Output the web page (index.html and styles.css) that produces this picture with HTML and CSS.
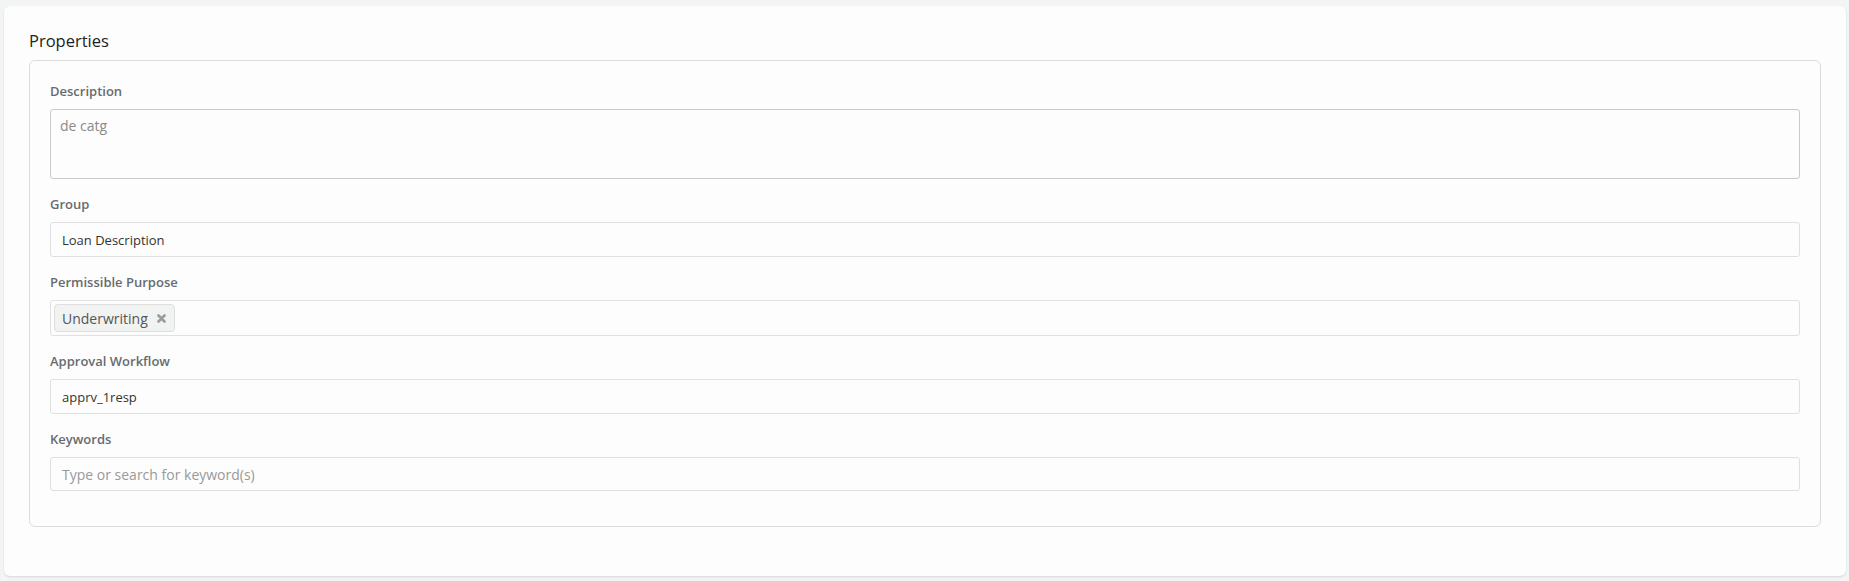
FILE: index.html
```html
<!DOCTYPE html>
<html lang="en">
<head>
<meta charset="utf-8">
<title>Properties</title>
<link rel="stylesheet" href="styles.css">
</head>
<body>
<div class="card">
  <h2 class="card-title">Properties</h2>
  <div class="panel">
    <div class="field">
      <label class="field-label">Description</label>
      <div class="textarea">de catg</div>
    </div>
    <div class="field">
      <label class="field-label">Group</label>
      <div class="input">Loan Description</div>
    </div>
    <div class="field">
      <label class="field-label">Permissible Purpose</label>
      <div class="input tags">
        <span class="chip">Underwriting
          <svg class="chip-x" width="9" height="9" viewBox="0 0 9 9"><path d="M1.5 1.5L7.5 7.5M7.5 1.5L1.5 7.5" stroke="#9a9a9a" stroke-width="2.6" stroke-linecap="round"/></svg>
        </span>
      </div>
    </div>
    <div class="field">
      <label class="field-label">Approval Workflow</label>
      <div class="input">apprv_1resp</div>
    </div>
    <div class="field last">
      <label class="field-label">Keywords</label>
      <div class="input placeholder">Type or search for keyword(s)</div>
    </div>
  </div>
</div>
</body>
</html>
```

FILE: styles.css
```css
html, body {
  margin: 0;
  padding: 0;
}
body {
  background: #f3f4f4;
  font-family: "Open Sans", "Liberation Sans", sans-serif;
  padding: 6px 3px 5px 4px;
  height: 581px;
  box-sizing: border-box;
}
.card {
  background: #fdfdfd;
  border-radius: 6px;
  box-shadow: 0 1px 2px rgba(0,0,0,0.12);
  height: 570px;
  box-sizing: border-box;
  padding: 23px 25px 0 25px;
}
.card-title {
  margin: 0 0 8px 0;
  font-size: 16.5px;
  line-height: 23px;
  font-weight: 400;
  color: #222;
}
.panel {
  border: 1px solid #dcdcdc;
  border-radius: 6px;
  padding: 21px 20px 35px 20px;
}
.field {
  display: flex;
  flex-direction: column;
  margin-bottom: 16px;
}
.field.last {
  margin-bottom: 0;
}
.field-label {
  font-size: 13px;
  line-height: 18px;
  font-weight: 600;
  color: #676b70;
  margin-bottom: 9px;
}
.textarea {
  height: 70px;
  box-sizing: border-box;
  border: 1px solid #c9c9c9;
  border-radius: 3px;
  padding: 6px 9px;
  font-size: 14px;
  line-height: 20px;
  color: #8a8a8a;
}
.input {
  height: 35px;
  box-sizing: border-box;
  border: 1px solid #e0e0e0;
  border-radius: 3px;
  padding: 0 11px;
  font-size: 13px;
  color: #333;
  display: flex;
  align-items: center;
}
.input.tags {
  height: 36px;
  padding: 0 3px;
}
.input.placeholder {
  height: 34px;
  color: #999;
  font-size: 14px;
}
.chip {
  display: inline-flex;
  align-items: center;
  gap: 9px;
  height: 28px;
  box-sizing: border-box;
  padding: 0 8px 0 7px;
  background: #f1f2f2;
  border: 1px solid #dedede;
  border-radius: 4px;
  font-size: 14px;
  color: #555;
}
.chip-x {
  display: block;
}
```
